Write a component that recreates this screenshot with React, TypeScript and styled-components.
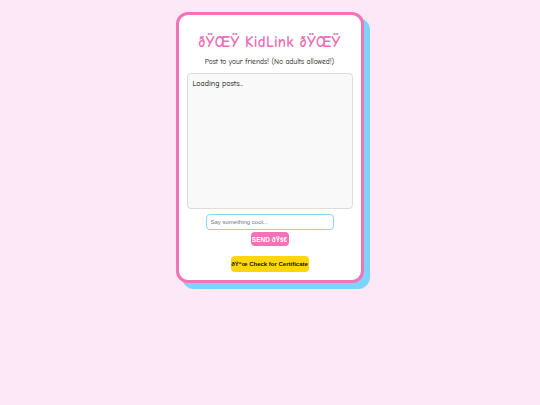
import React from 'react';
import styled, { createGlobalStyle } from 'styled-components';

const GlobalStyle = createGlobalStyle`
    html, body {
        margin: 0;
        padding: 0;
        background: #fde8f7;
    }
    body {
        font-family: "Comic Sans MS", "Comic Neue", cursive;
    }
`;

const Page = styled.div`
    width: 540px;
    height: 405px;
    display: flex;
    justify-content: center;
    align-items: flex-start;
    padding-top: 12px;
    box-sizing: border-box;
`;

const Card = styled.div`
    width: 188px;
    box-sizing: border-box;
    background: #fff;
    border: 3px solid #f472b6;
    border-radius: 12px;
    box-shadow: 6px 6px 0 #7dd3fc;
    padding: 15px 8px 8px;
    display: flex;
    flex-direction: column;
    align-items: center;
    margin-left: -1px;
`;

const Title = styled.h1`
    margin: 2px 0 0;
    font-size: 15px;
    line-height: 20px;
    font-weight: bold;
    color: #ec6fb5;
    letter-spacing: 0.3px;
`;

const Subtitle = styled.p`
    margin: 4px 0 6px;
    font-size: 7.5px;
    line-height: 11px;
    color: #111;
`;

const PostList = styled.div`
    align-self: stretch;
    height: 136px;
    box-sizing: border-box;
    background: #f9f9f9;
    border: 1px solid #dcdcdc;
    border-radius: 4px;
    padding: 5px 5px;
    font-size: 8px;
    line-height: 10px;
    color: #000;
`;

const Input = styled.input`
    margin-top: 5px;
    width: 128px;
    height: 16px;
    box-sizing: border-box;
    border: 1.5px solid #8fd3f3;
    border-radius: 4px;
    padding: 0 4px;
    font-family: "Liberation Sans", Arial, sans-serif;
    font-size: 6px;
    outline: none;
    &::placeholder {
        color: #777;
    }
`;

const Button = styled.button<{ $tone: 'pink' | 'gold' }>`
    border: none;
    border-radius: 4px;
    font-family: "Liberation Sans", Arial, sans-serif;
    font-weight: bold;
    font-size: 6px;
    cursor: pointer;
    background: ${(p) => (p.$tone === 'pink' ? '#f472b6' : '#ffd60a')};
    color: ${(p) => (p.$tone === 'pink' ? '#fff' : '#111')};
`;

const SendButton = styled(Button)`
    margin-top: 2px;
    width: 38px;
    height: 14px;
    padding: 0;
    font-size: 6.5px;
`;

const CertButton = styled(Button)`
    margin-top: 10px;
    width: 78px;
    height: 16px;
    padding: 0;
`;

export default function App() {
    return (
        <>
            <GlobalStyle />
            <Page>
                <Card>
                    <Title>{'\u00F0\u0178\u0152\u0178 KidLink \u00F0\u0178\u0152\u0178'}</Title>
                    <Subtitle>Post to your friends! (No adults allowed!)</Subtitle>
                    <PostList>Loading posts...</PostList>
                    <Input placeholder="Say something cool..." />
                    <SendButton $tone="pink">{'SEND \u00F0\u0178\u0161\u20AC'}</SendButton>
                    <CertButton $tone="gold">{'\u00F0\u0178\u201C\u0153 Check for Certificate'}</CertButton>
                </Card>
            </Page>
        </>
    );
}
